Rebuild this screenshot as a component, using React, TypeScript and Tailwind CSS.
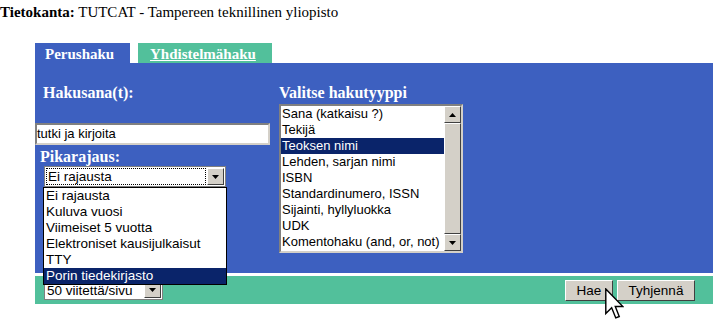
import React from "react";

const serif = { fontFamily: '"Liberation Serif", "Times New Roman", serif' };
const sans = { fontFamily: '"Liberation Sans", Arial, sans-serif' };

function DownArrowBtn({ h = 17 }: { h?: number }) {
  return (
    <div
      className="flex items-center justify-center bg-[#d4d0c8] border border-t-white border-l-white border-r-[#404040] border-b-[#404040] shrink-0"
      style={{ width: 17, height: h }}
    >
      <svg width="7" height="4" viewBox="0 0 7 4">
        <polygon points="0,0 7,0 3.5,4" fill="#000" />
      </svg>
    </div>
  );
}

function UpArrowBtn({ h = 16 }: { h?: number }) {
  return (
    <div
      className="flex items-center justify-center bg-[#d4d0c8] border border-t-white border-l-white border-r-[#404040] border-b-[#404040] shrink-0"
      style={{ width: 17, height: h }}
    >
      <svg width="7" height="4" viewBox="0 0 7 4">
        <polygon points="3.5,0 7,4 0,4" fill="#000" />
      </svg>
    </div>
  );
}

export default function App() {
  const types = [
    "Sana (katkaisu ?)",
    "Tekijä",
    "Teoksen nimi",
    "Lehden, sarjan nimi",
    "ISBN",
    "Standardinumero, ISSN",
    "Sijainti, hyllyluokka",
    "UDK",
    "Komentohaku (and, or, not)",
  ];
  const limits = [
    "Ei rajausta",
    "Kuluva vuosi",
    "Viimeiset 5 vuotta",
    "Elektroniset kausijulkaisut",
    "TTY",
    "Porin tiedekirjasto",
  ];
  return (
    <div className="relative w-[713px] h-[322px] bg-white overflow-hidden" style={serif}>
      <div className="pt-[3px] h-[22px] text-[15px] leading-[18px] text-black">
        <b>Tietokanta:</b> TUTCAT - Tampereen teknillinen yliopisto
      </div>

      <div className="ml-[35px] mt-[21px] flex gap-[8px] h-[20px]">
        <div className="w-[95px] h-[20px] bg-[#3d60c0] text-white font-bold text-[15px] leading-[20px] pl-[10px] pt-[1px]">
          Perushaku
        </div>
        <div className="w-[134px] h-[20px] bg-[#52c09b] text-white font-bold text-[15px] leading-[20px] pl-[12px] pt-[1px] underline">
          Yhdistelmähaku
        </div>
      </div>

      <div className="ml-[35px] h-[210px] bg-[#3d60c0] flex relative z-10">
        <div className="w-[244px] flex flex-col">
          <div className="pl-[8px] pt-[21px] text-white font-bold text-[16px] leading-[18px]">Hakusana(t):</div>
          <div
            className="mt-[21px] w-[235px] h-[22px] bg-white border-2 border-t-[#808080] border-l-[#808080] border-r-[#d4d0c8] border-b-[#d4d0c8] text-[13px] leading-[18px] text-black"
            style={sans}
          >
            tutki ja kirjoita
          </div>
          <div className="pl-[5px] pt-[3px] text-white font-bold text-[16px] leading-[18px]">Pikarajaus:</div>
          <div className="relative ml-[9px] w-[182px]">
            <div
              className="h-[21px] bg-white border border-[#7f7f7f] flex items-center justify-between pl-[2px] pr-[1px]"
              style={sans}
            >
              <span className="text-[13.5px] leading-[15px] text-black outline-1 outline-dotted outline-black px-[1px] flex-1 mr-[2px]">
                Ei rajausta
              </span>
              <DownArrowBtn h={17} />
            </div>
            <div
              className="absolute left-[-1px] top-[21px] w-[184px] bg-white border border-black z-30"
              style={sans}
            >
              {limits.map((l, i) => (
                <div
                  key={l}
                  className={
                    "h-[16px] text-[13.5px] leading-[16px] pl-[2px] whitespace-nowrap " +
                    (i === limits.length - 1 ? "bg-[#0a246a] text-white" : "text-black")
                  }
                >
                  {l}
                </div>
              ))}
            </div>
          </div>
        </div>

        <div className="flex flex-col">
          <div className="pt-[21px] text-white font-bold text-[16px] leading-[18px]">Valitse hakutyyppi</div>
          <div
            className="mt-[2px] w-[184px] h-[149px] bg-white border-2 border-t-[#808080] border-l-[#808080] border-r-[#d4d0c8] border-b-[#d4d0c8] flex"
            style={sans}
          >
            <div className="flex-1 flex flex-col">
              {types.map((t, i) => (
                <div
                  key={t}
                  className={
                    "h-[16px] text-[13px] leading-[16px] pl-[1px] whitespace-nowrap " +
                    (i === 2 ? "bg-[#0a246a] text-white" : "text-black")
                  }
                >
                  {t}
                </div>
              ))}
            </div>
            <div className="w-[17px] flex flex-col bg-[#e6e3dd]">
              <UpArrowBtn h={17} />
              <div className="flex-1 bg-[#d4d0c8] border border-t-white border-l-white border-r-[#404040] border-b-[#404040]" />
              <DownArrowBtn h={17} />
            </div>
          </div>
        </div>
      </div>

      <div className="ml-[35px] mt-[3px] h-[28px] bg-[#52c09b] flex items-center justify-between pr-[18px]">
        <div
          className="ml-[9px] w-[119px] h-[19px] bg-white border border-[#7f7f7f] flex items-center justify-between pl-[2px] pr-[1px]"
          style={sans}
        >
          <span className="text-[13.5px] leading-[15px] text-black">50 viitettä/sivu</span>
          <DownArrowBtn h={15} />
        </div>
        <div className="flex gap-[4px]" style={sans}>
          <div className="w-[48px] h-[21px] bg-[#d4d0c8] border border-t-white border-l-white border-r-[#404040] border-b-[#404040] text-[13.5px] leading-[19px] text-black text-center">
            Hae
          </div>
          <div className="w-[78px] h-[21px] bg-[#d4d0c8] border border-t-white border-l-white border-r-[#404040] border-b-[#404040] text-[13.5px] leading-[19px] text-black text-center">
            Tyhjennä
          </div>
        </div>
      </div>

      <svg
        className="absolute left-[605px] top-[288px] z-40"
        width="19"
        height="32"
        viewBox="0 0 12 20"
      >
        <polygon
          points="0.5,0.5 0.5,16 4.2,12.4 6.8,18.8 9,17.9 6.5,11.6 11.3,11.6"
          fill="#fff"
          stroke="#000"
          strokeWidth="0.9"
          strokeLinejoin="miter"
        />
      </svg>
    </div>
  );
}
